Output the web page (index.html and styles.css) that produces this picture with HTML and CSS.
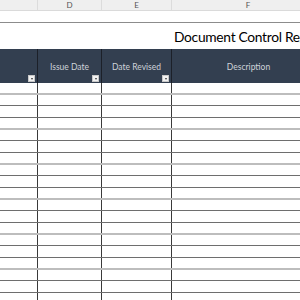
FILE: index.html
```html
<!DOCTYPE html>
<html>
<head>
<meta charset="utf-8">
<link rel="stylesheet" href="styles.css">
</head>
<body>
<div class="sheet">
  <div class="row colhead">
    <div class="cell c"></div>
    <div class="cell d">D</div>
    <div class="cell e">E</div>
    <div class="cell f">F</div>
  </div>
  <div class="row blank"></div>
  <div class="row titlerow">
    <div class="cell c"></div>
    <div class="cell d"></div>
    <div class="cell e"></div>
    <div class="cell f"><span class="title">Document Control Register</span></div>
  </div>
  <div class="row thead">
    <div class="cell c"><span class="dd"></span></div>
    <div class="cell d">Issue Date<span class="dd"></span></div>
    <div class="cell e">Date Revised<span class="dd"></span></div>
    <div class="cell f">Description</div>
  </div>
  <div class="body">
    <div class="row r r1"><div class="cell c"></div><div class="cell d"></div><div class="cell e"></div><div class="cell f"></div></div>
    <div class="row r r2"><div class="cell c"></div><div class="cell d"></div><div class="cell e"></div><div class="cell f"></div></div>
    <div class="row r r3"><div class="cell c"></div><div class="cell d"></div><div class="cell e"></div><div class="cell f"></div></div>
    <div class="row r r1"><div class="cell c"></div><div class="cell d"></div><div class="cell e"></div><div class="cell f"></div></div>
    <div class="row r r2"><div class="cell c"></div><div class="cell d"></div><div class="cell e"></div><div class="cell f"></div></div>
    <div class="row r r3"><div class="cell c"></div><div class="cell d"></div><div class="cell e"></div><div class="cell f"></div></div>
    <div class="row r r1"><div class="cell c"></div><div class="cell d"></div><div class="cell e"></div><div class="cell f"></div></div>
    <div class="row r r2"><div class="cell c"></div><div class="cell d"></div><div class="cell e"></div><div class="cell f"></div></div>
    <div class="row r r3"><div class="cell c"></div><div class="cell d"></div><div class="cell e"></div><div class="cell f"></div></div>
    <div class="row r r1"><div class="cell c"></div><div class="cell d"></div><div class="cell e"></div><div class="cell f"></div></div>
    <div class="row r r2"><div class="cell c"></div><div class="cell d"></div><div class="cell e"></div><div class="cell f"></div></div>
    <div class="row r r3"><div class="cell c"></div><div class="cell d"></div><div class="cell e"></div><div class="cell f"></div></div>
    <div class="row r r1"><div class="cell c"></div><div class="cell d"></div><div class="cell e"></div><div class="cell f"></div></div>
    <div class="row r r2"><div class="cell c"></div><div class="cell d"></div><div class="cell e"></div><div class="cell f"></div></div>
    <div class="row r r3"><div class="cell c"></div><div class="cell d"></div><div class="cell e"></div><div class="cell f"></div></div>
    <div class="row r r1"><div class="cell c"></div><div class="cell d"></div><div class="cell e"></div><div class="cell f"></div></div>
    <div class="row r r2"><div class="cell c"></div><div class="cell d"></div><div class="cell e"></div><div class="cell f"></div></div>
    <div class="row r r3"><div class="cell c"></div><div class="cell d"></div><div class="cell e"></div><div class="cell f"></div></div>
    <div class="row r r1"><div class="cell c"></div><div class="cell d"></div><div class="cell e"></div><div class="cell f"></div></div>
  </div>
  <div class="footer"></div>
</div>
</body>
</html>
```
FILE: styles.css
```css
html, body {
  margin: 0;
  padding: 0;
  background: #ffffff;
  overflow: hidden;
}
.sheet {
  width: 300px;
  height: 300px;
  overflow: hidden;
  font-family: Lato, "Liberation Sans", sans-serif;
  display: flex;
  flex-direction: column;
}
.row {
  display: flex;
  flex: none;
  box-sizing: border-box;
}
.cell {
  box-sizing: border-box;
  flex: none;
  height: 100%;
}
.c { width: 38px; }
.d { width: 64px; }
.e { width: 70px; }
.f { width: 152px; }

.colhead {
  height: 11px;
  background: #efefef;
  border-bottom: 1px solid #dadada;
}
.colhead .cell {
  border-right: 1px solid #dcdcdc;
  font-size: 8px;
  line-height: 10px;
  color: #555;
  text-align: center;
}
.colhead .f { border-right: none; }

.blank {
  height: 12px;
  border-bottom: 1px solid #8c8c8c;
}

.titlerow {
  height: 26px;
}
.titlerow .f {
  overflow: visible;
  white-space: nowrap;
  padding-left: 2px;
  display: flex;
  align-items: center;
}
.title {
  font-size: 13.8px;
  letter-spacing: -0.3px;
  color: #000;
}

.thead {
  height: 34px;
  background: #333f50;
}
.thead .cell {
  position: relative;
  border-right: 1px solid #1c2029;
  color: #cfd3d9;
  font-size: 8.5px;
  text-align: center;
  padding-top: 13px;
  white-space: nowrap;
}
.thead .f { border-right: none; width: 153px; }
.dd {
  position: absolute;
  right: 2px;
  bottom: 1px;
  width: 7px;
  height: 7px;
  background: #f2f2f2;
  border: 1px solid #c8c8c8;
  box-sizing: border-box;
}
.dd::after {
  content: "";
  position: absolute;
  left: 2px;
  top: 2px;
  border-left: 1.5px solid transparent;
  border-right: 1.5px solid transparent;
  border-top: 2px solid #333;
}

.body {
  display: flex;
  flex-direction: column;
}
.r .cell {
  border-right: 1px solid #3a3a3a;
}
.r .f { border-right: none; }
.r1 { height: 12px; border-bottom: 2px solid #bdbdbd; }
.r2 { height: 11px; border-bottom: 1px solid #6e6e6e; }
.r3 { height: 12px; border-bottom: 1px solid #6e6e6e; }

.footer {
  flex: 1;
  background: #eeeeee;
}
```
